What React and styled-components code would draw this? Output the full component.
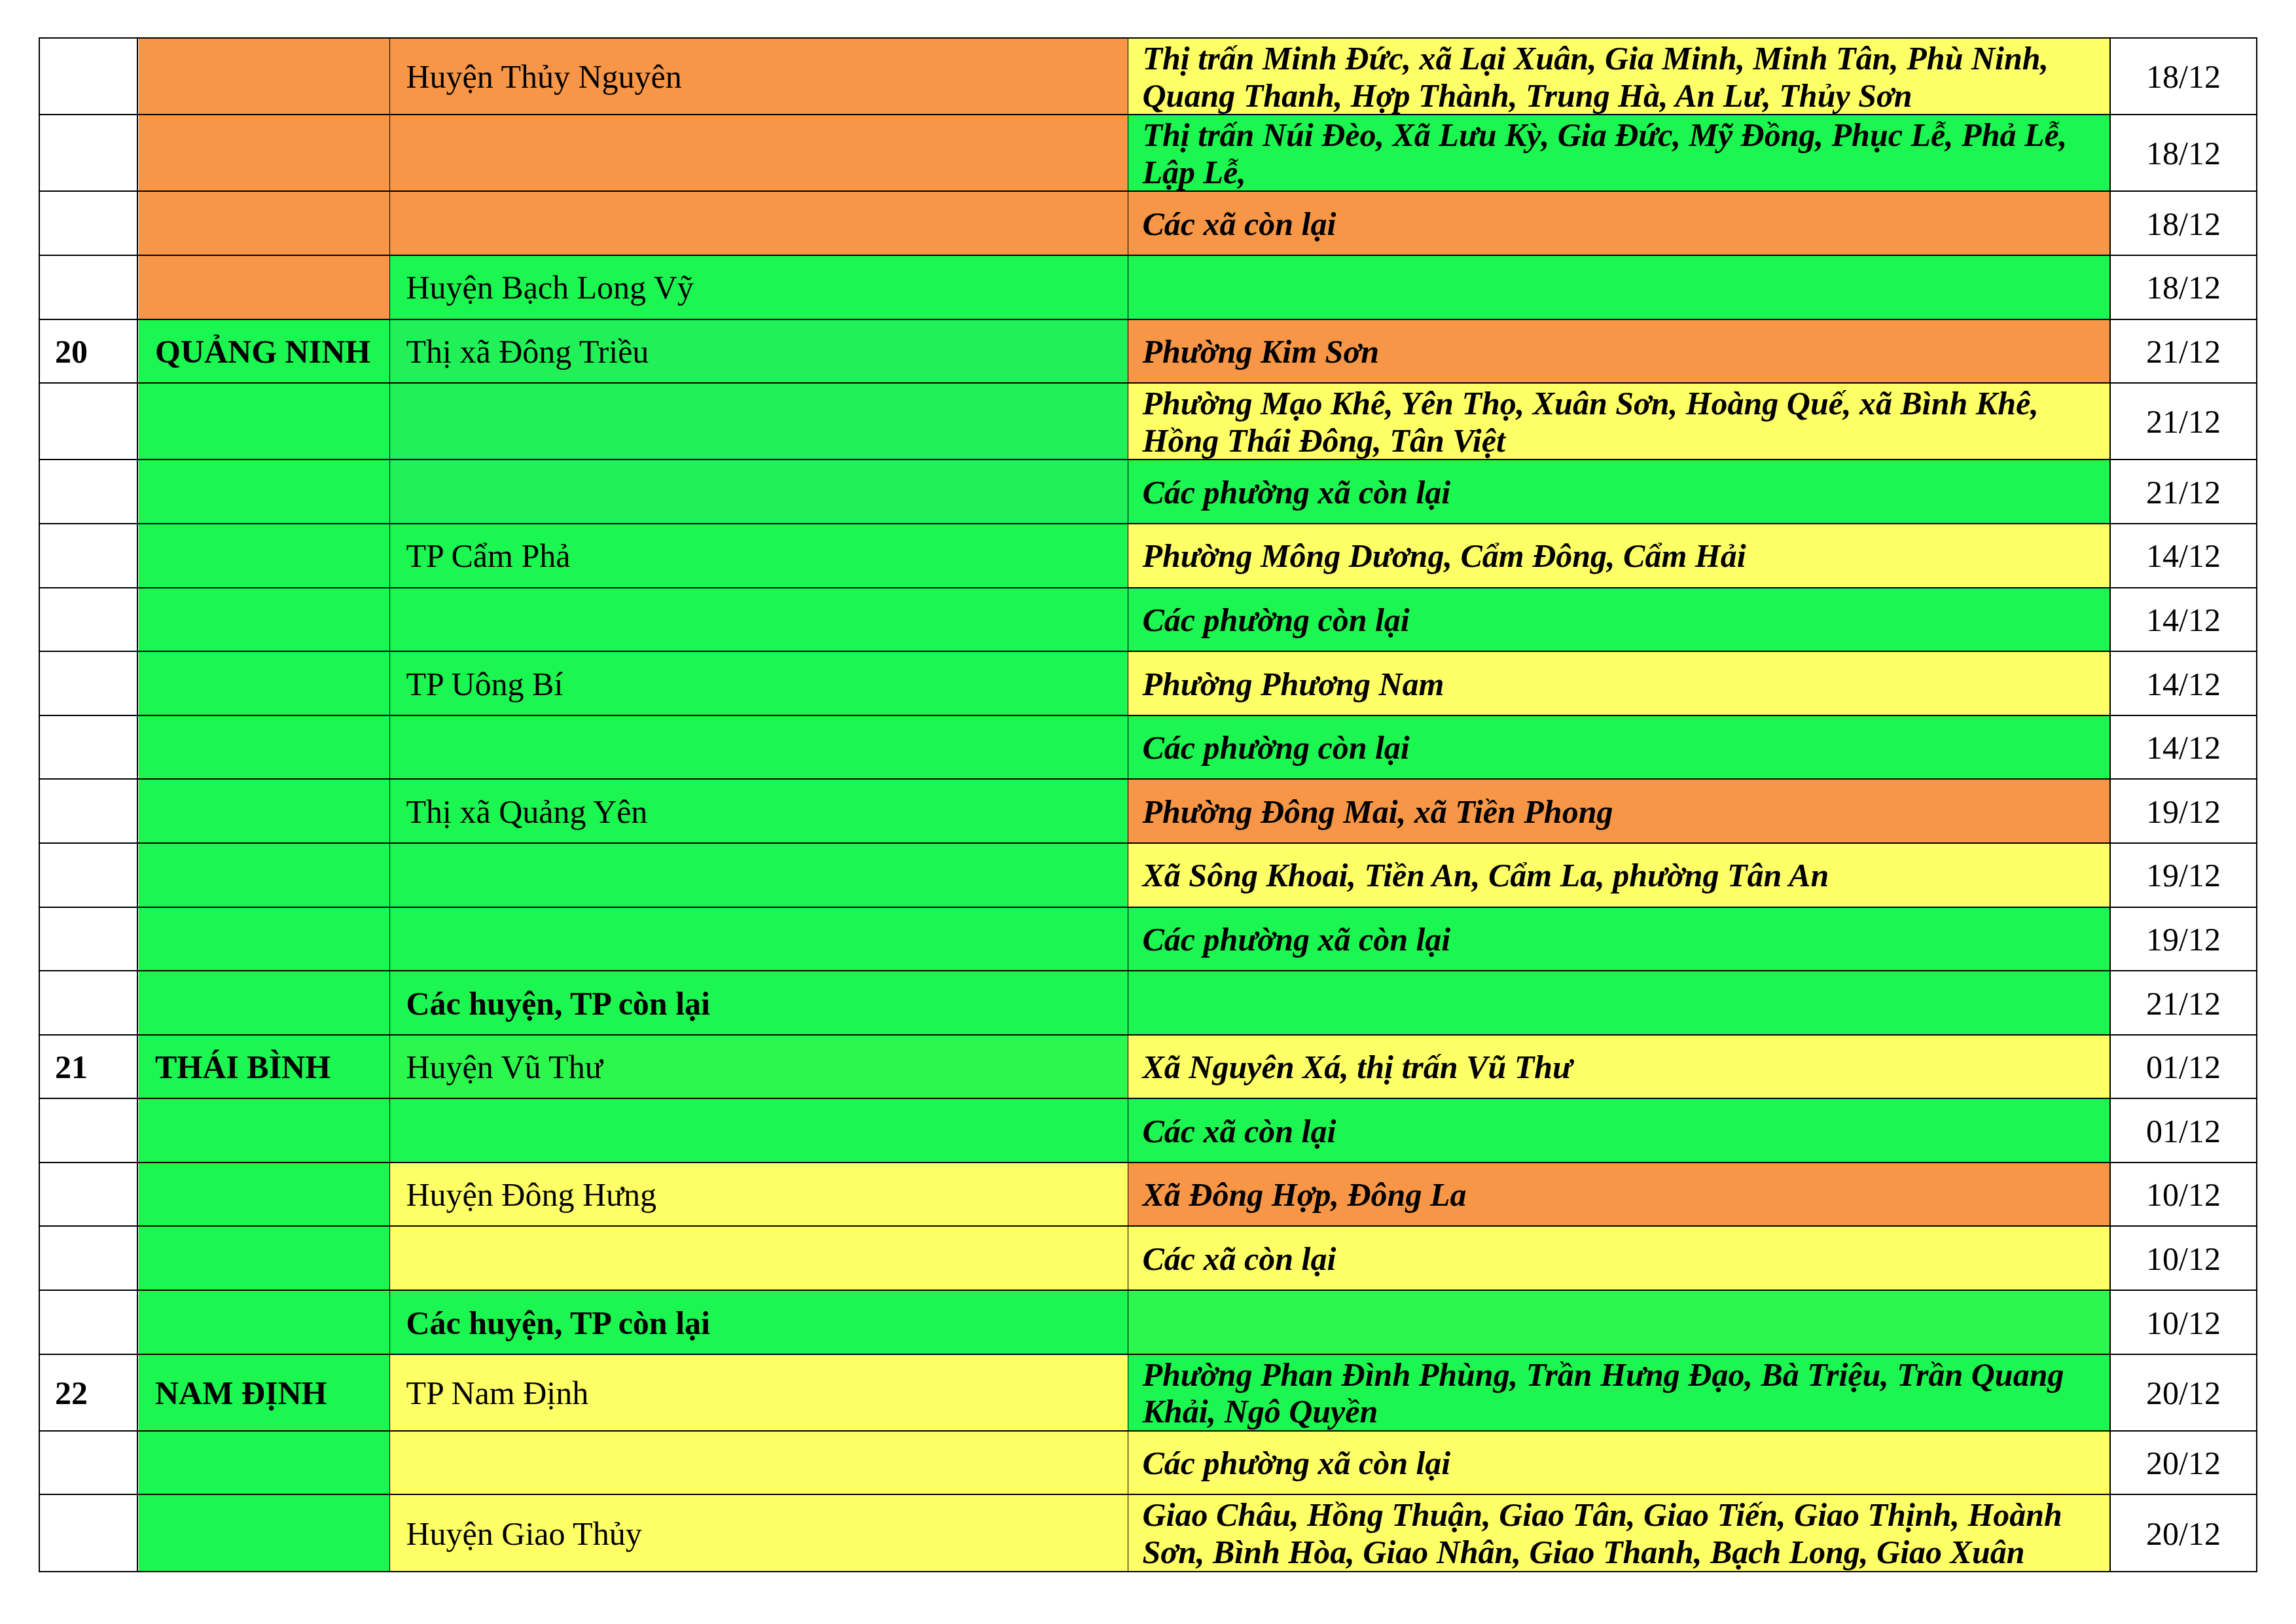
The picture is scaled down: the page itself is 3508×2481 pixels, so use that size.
import React from 'react'
import styled, { createGlobalStyle } from 'styled-components'

const GlobalStyle = createGlobalStyle`
  html, body {
    margin: 0;
    padding: 0;
    background: #ffffff;
  }
  body {
    font-family: "Liberation Serif", "Times New Roman", serif;
    color: #000;
  }
`

const COLORS = {
  orange: '#F79646',
  yellow: '#FFFF66',
  green: '#1BF750',
  green2: '#22F058',
  green3: '#2BF74C',
}

// column widths in px, left to right
const WIDTHS = [150, 385, 1128, 1501, 224]

const rows = [
  { c2: 'orange', c3: 'orange', c4: 'yellow', district: 'Huyện Thủy Nguyên', areas: ['Thị trấn Minh Đức, xã Lại Xuân, Gia Minh, Minh Tân, Phù Ninh,', 'Quang Thanh, Hợp Thành, Trung Hà, An Lư, Thủy Sơn'], date: '18/12' },
  { c2: 'orange', c3: 'orange', c4: 'green', areas: ['Thị trấn Núi Đèo, Xã Lưu Kỳ, Gia Đức, Mỹ Đồng, Phục Lễ, Phả Lễ,', 'Lập Lễ,'], date: '18/12' },
  { c2: 'orange', c3: 'orange', c4: 'orange', areas: ['Các xã còn lại'], date: '18/12' },
  { c2: 'orange', c3: 'green', c4: 'green', district: 'Huyện Bạch Long Vỹ', date: '18/12' },
  { no: '20', province: 'QUẢNG NINH', c2: 'green', c3: 'green2', c4: 'orange', district: 'Thị xã Đông Triều', areas: ['Phường Kim Sơn'], date: '21/12' },
  { c2: 'green', c3: 'green2', c4: 'yellow', areas: ['Phường Mạo Khê, Yên Thọ, Xuân Sơn, Hoàng Quế, xã Bình Khê,', 'Hồng Thái Đông, Tân Việt'], date: '21/12' },
  { c2: 'green', c3: 'green2', c4: 'green', areas: ['Các phường xã còn lại'], date: '21/12' },
  { c2: 'green', c3: 'green', c4: 'yellow', district: 'TP Cẩm Phả', areas: ['Phường Mông Dương, Cẩm Đông, Cẩm Hải'], date: '14/12' },
  { c2: 'green', c3: 'green', c4: 'green', areas: ['Các phường còn lại'], date: '14/12' },
  { c2: 'green', c3: 'green', c4: 'yellow', district: 'TP Uông Bí', areas: ['Phường Phương Nam'], date: '14/12' },
  { c2: 'green', c3: 'green', c4: 'green', areas: ['Các phường còn lại'], date: '14/12' },
  { c2: 'green', c3: 'green', c4: 'orange', district: 'Thị xã Quảng Yên', areas: ['Phường Đông Mai, xã Tiền Phong'], date: '19/12' },
  { c2: 'green', c3: 'green', c4: 'yellow', areas: ['Xã Sông Khoai, Tiền An, Cẩm La, phường Tân An'], date: '19/12' },
  { c2: 'green', c3: 'green', c4: 'green', areas: ['Các phường xã còn lại'], date: '19/12' },
  { c2: 'green', c3: 'green', c4: 'green', district: 'Các huyện, TP còn lại', strong: true, date: '21/12' },
  { no: '21', province: 'THÁI BÌNH', c2: 'green', c3: 'green3', c4: 'yellow', district: 'Huyện Vũ Thư', areas: ['Xã Nguyên Xá, thị trấn Vũ Thư'], date: '01/12' },
  { c2: 'green', c3: 'green', c4: 'green', areas: ['Các xã còn lại'], date: '01/12' },
  { c2: 'green', c3: 'yellow', c4: 'orange', district: 'Huyện Đông Hưng', areas: ['Xã Đông Hợp, Đông La'], date: '10/12' },
  { c2: 'green', c3: 'yellow', c4: 'yellow', areas: ['Các xã còn lại'], date: '10/12' },
  { c2: 'green', c3: 'green', c4: 'green3', district: 'Các huyện, TP còn lại', strong: true, date: '10/12' },
  { no: '22', province: 'NAM ĐỊNH', c2: 'green', c3: 'yellow', c4: 'green', district: 'TP Nam Định', areas: ['Phường Phan Đình Phùng, Trần Hưng Đạo, Bà Triệu, Trần Quang', 'Khải, Ngô Quyền'], date: '20/12' },
  { c2: 'green', c3: 'yellow', c4: 'yellow', areas: ['Các phường xã còn lại'], date: '20/12' },
  { c2: 'green', c3: 'yellow', c4: 'yellow', district: 'Huyện Giao Thủy', areas: ['Giao Châu, Hồng Thuận, Giao Tân, Giao Tiến, Giao Thịnh, Hoành', 'Sơn, Bình Hòa, Giao Nhân, Giao Thanh, Bạch Long, Giao Xuân'], date: '20/12' },
]

export default function App() {
  return (
    <>
      <GlobalStyle />
      <Page>
        <Table>
          <colgroup>
            {WIDTHS.map((w, i) => (
              <Col key={i} $w={w} />
            ))}
          </colgroup>
          <tbody>
            {rows.map((r, i) => (
              <Row key={i}>
                <NoCell>{r.no}</NoCell>
                <ProvinceCell $bg={COLORS[r.c2]}>{r.province}</ProvinceCell>
                <DistrictCell $bg={COLORS[r.c3]} $strong={r.strong}>{r.district}</DistrictCell>
                <AreaCell $bg={COLORS[r.c4]}>
                  {(r.areas || []).map((line, j) => (
                    <Line key={j}>{line}</Line>
                  ))}
                </AreaCell>
                <DateCell>{r.date}</DateCell>
              </Row>
            ))}
          </tbody>
        </Table>
      </Page>
    </>
  )
}

const Page = styled.div`
  padding: 57px 0 0 59px;
`

const Table = styled.table`
  border-collapse: collapse;
  table-layout: fixed;
  width: 3390px;
  border: 2px solid #000;
`

const Col = styled.col`
  width: ${(p) => p.$w}px;
`

const Row = styled.tr`
  height: 97.6px;
`

const Cell = styled.td`
  padding: 2px 24px 0;
  vertical-align: middle;
  font-size: 50px;
  line-height: 56.6px;
  border-top: 2px solid #000;
  border-bottom: 2px solid #000;
  border-left: 1px solid #000;
  border-right: 1px solid #000;
  background: ${(p) => p.$bg || '#fff'};
  white-space: nowrap;
  overflow: hidden;
`

const NoCell = styled(Cell)`
  font-weight: 700;
  border-left: 2px solid #000;
  border-right: 2px solid #000;
  padding-left: 23px;
`

const ProvinceCell = styled(Cell)`
  font-weight: 700;
  box-shadow: inset 1px 0 0 #fff;
  padding-left: 26px;
`

const DistrictCell = styled(Cell)`
  font-weight: ${(p) => (p.$strong ? 700 : 400)};
  padding-left: 25px;
`

const AreaCell = styled(Cell)`
  font-weight: 700;
  font-style: italic;
  padding-left: 22px;
  border-right: 2px solid #000;
`

const Line = styled.span`
  display: block;
`

const DateCell = styled(Cell)`
  text-align: center;
  padding-left: 0;
  padding-right: 0;
  border-right: 2px solid #000;
`
